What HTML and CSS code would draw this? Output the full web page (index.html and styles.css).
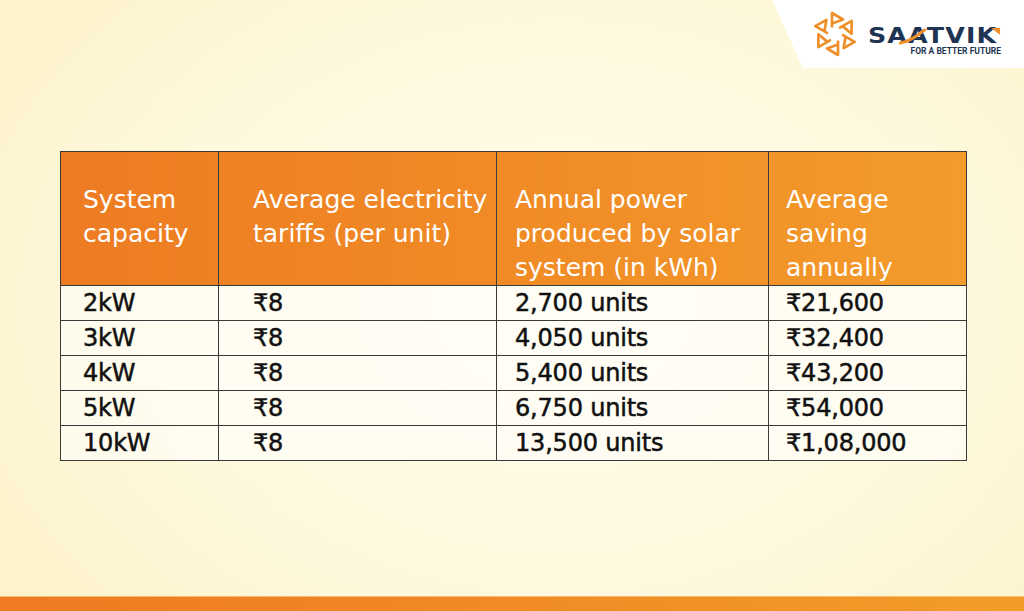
FILE: index.html
```html
<!DOCTYPE html>
<html lang="en">
<head>
<meta charset="utf-8">
<title>Solar savings by system capacity</title>
<link rel="stylesheet" href="styles.css">
</head>
<body>
<div class="page">
  <header class="topbar">
    <div class="brand">
      <svg class="brand-mark" width="46" height="46" viewBox="0 0 46 46" aria-hidden="true">
        <g transform="translate(23 23)" fill="none" stroke="#ef8f2a" stroke-width="2.7" stroke-linejoin="round" stroke-linecap="round">
          <path d="M-3 -7.5 L-3 -21 L8 -14.5 L-3 -10.5"/>
          <path d="M-3 -7.5 L-3 -21 L8 -14.5 L-3 -10.5" transform="rotate(60)"/>
          <path d="M-3 -7.5 L-3 -21 L8 -14.5 L-3 -10.5" transform="rotate(120)"/>
          <path d="M-3 -7.5 L-3 -21 L8 -14.5 L-3 -10.5" transform="rotate(180)"/>
          <path d="M-3 -7.5 L-3 -21 L8 -14.5 L-3 -10.5" transform="rotate(240)"/>
          <path d="M-3 -7.5 L-3 -21 L8 -14.5 L-3 -10.5" transform="rotate(300)"/>
        </g>
      </svg>
      <div class="brand-text">
        <div class="brand-name">SAATVIK<svg class="swoosh" width="24" height="18" viewBox="0 0 24 18" aria-hidden="true"><path d="M1 15 Q 11 13 22 2" fill="none" stroke="#ef8f2a" stroke-width="3" stroke-linecap="round"/></svg><svg class="k-tip" width="8" height="7" viewBox="0 0 8 7" aria-hidden="true"><polygon points="0,0 8,0 8,7" fill="#ef8f2a"/></svg></div>
        <div class="brand-tag">FOR A BETTER FUTURE</div>
      </div>
    </div>
  </header>

  <main class="content">
    <table class="savings">
      <colgroup>
        <col class="col-cap">
        <col class="col-tariff">
        <col class="col-power">
        <col class="col-saving">
      </colgroup>
      <thead>
        <tr class="head-row">
          <th>System<br>capacity</th>
          <th>Average electricity<br>tariffs (per unit)</th>
          <th>Annual power<br>produced by solar<br>system (in kWh)</th>
          <th>Average<br>saving<br>annually</th>
        </tr>
      </thead>
      <tbody>
        <tr><td>2kW</td><td>₹8</td><td>2,700 units</td><td>₹21,600</td></tr>
        <tr><td>3kW</td><td>₹8</td><td>4,050 units</td><td>₹32,400</td></tr>
        <tr><td>4kW</td><td>₹8</td><td>5,400 units</td><td>₹43,200</td></tr>
        <tr><td>5kW</td><td>₹8</td><td>6,750 units</td><td>₹54,000</td></tr>
        <tr><td>10kW</td><td>₹8</td><td>13,500 units</td><td>₹1,08,000</td></tr>
      </tbody>
    </table>
  </main>

  <div class="footer-bar"></div>
</div>
</body>
</html>
```

FILE: styles.css
```css
* { box-sizing: border-box; }

html, body {
  margin: 0;
  padding: 0;
}

.page {
  width: 1024px;
  height: 611px;
  display: flex;
  flex-direction: column;
  overflow: hidden;
  background:
    radial-gradient(ellipse 70% 85% at 55% 50%, #fffcea 0%, #fef9de 55%, #fdf2c8 100%);
  font-family: "DejaVu Sans", "Noto Sans", sans-serif;
}

/* ---------- top bar / brand ---------- */
.topbar {
  display: flex;
  justify-content: flex-end;
  height: 68px;
  flex: none;
}

.brand {
  width: 252px;
  height: 68px;
  background: #ffffff;
  clip-path: polygon(0 0, 100% 0, 100% 100%, 31px 100%);
  display: flex;
  align-items: flex-start;
  padding: 11px 0 0 40px;
  gap: 10px;
}

.brand-mark {
  flex: none;
  display: block;
}

.brand-text {
  margin-top: 15px;
  display: flex;
  flex-direction: column;
  width: 133px;
}

.brand-name {
  position: relative;
  font-family: "DejaVu Sans", sans-serif;
  font-weight: bold;
  font-size: 22px;
  line-height: 20px;
  letter-spacing: 1px;
  color: #1e3452;
  transform: scaleX(1.15);
  transform-origin: left center;
  white-space: nowrap;
}

.swoosh {
  position: absolute;
  left: 27px;
  top: 2px;
}

.k-tip {
  position: absolute;
  left: 107px;
  top: 2px;
}

.brand-tag {
  font-family: Roboto, "Liberation Sans", sans-serif;
  font-weight: bold;
  font-size: 8.5px;
  line-height: 10px;
  color: #1e3452;
  text-align: right;
  white-space: nowrap;
}

/* ---------- table ---------- */
.content {
  flex: none;
  padding: 83px 0 0 60px;
}

.savings {
  border-collapse: collapse;
  table-layout: fixed;
  width: 906px;
  font-size: 25px;
}

.col-cap { width: 158px; }
.col-tariff { width: 278px; }
.col-power { width: 272px; }
.col-saving { width: 198px; }

.savings th,
.savings td {
  border: 1.5px solid #3a3a3a;
  text-align: left;
  white-space: nowrap;
  padding: 0;
}

.head-row { height: 134px; }

.savings th {
  vertical-align: top;
  padding-top: 31px;
  font-weight: normal;
  color: #ffffff;
  line-height: 34px;
}

.savings th:nth-child(1) { background: linear-gradient(90deg, #ed7b22, #ee8124); }
.savings th:nth-child(2) { background: linear-gradient(90deg, #ee8124, #f08a26); }
.savings th:nth-child(3) { background: linear-gradient(90deg, #f08a26, #f29429); }
.savings th:nth-child(4) { background: linear-gradient(90deg, #f29429, #f39b2b); }

.savings tbody tr { height: 35px; }

.savings td {
  vertical-align: middle;
  font-size: 24px;
  letter-spacing: -0.2px;
  line-height: 30px;
  color: #111111;
  -webkit-text-stroke: 0.5px #111111;
  background: rgba(255, 255, 255, 0.55);
}

.savings th:nth-child(1), .savings td:nth-child(1) { padding-left: 22px; }
.savings th:nth-child(2), .savings td:nth-child(2) { padding-left: 34px; }
.savings th:nth-child(3), .savings td:nth-child(3) { padding-left: 18px; }
.savings th:nth-child(4), .savings td:nth-child(4) { padding-left: 17px; }

/* ---------- footer ---------- */
.footer-bar {
  margin-top: auto;
  flex: none;
  height: 15px;
  background: linear-gradient(90deg, #ee7a22, #f39c28);
  border-top: 1px solid #f6bb70;
}
```
